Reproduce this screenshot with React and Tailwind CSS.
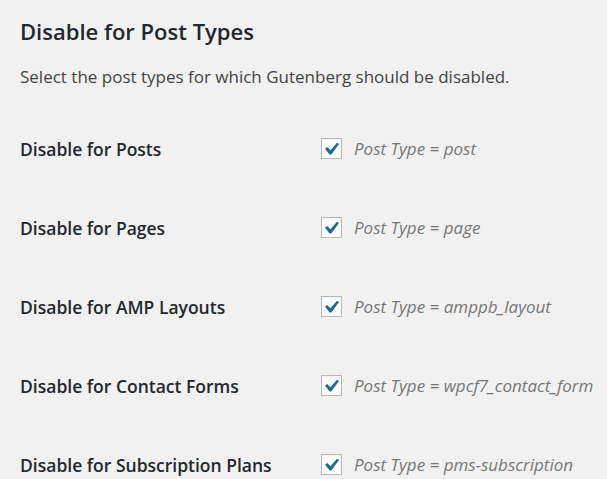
import React from 'react'

const rows = [
  { label: 'Disable for Posts', type: 'post' },
  { label: 'Disable for Pages', type: 'page' },
  { label: 'Disable for AMP Layouts', type: 'amppb_layout' },
  { label: 'Disable for Contact Forms', type: 'wpcf7_contact_form' },
  { label: 'Disable for Subscription Plans', type: 'pms-subscription' },
]

function Check() {
  return (
    <span className="flex h-[21px] w-[21px] shrink-0 items-center justify-center border border-[#b4b9be] bg-white shadow-[inset_0_1px_2px_rgba(0,0,0,0.07)]">
      <svg viewBox="3 2 15 15" className="h-[21px] w-[21px]">
        <path d="M14.83 4.89l1.6 1.1-6.07 8.22H9.02L5.4 9.67l1.6-1.45 2.7 2.6z" fill="#1e6a92" />
      </svg>
    </span>
  )
}

export default function App() {
  return (
    <div className="h-[479px] w-full overflow-hidden bg-[#f1f1f1] px-5 pt-4 text-[#23282d]" style={{ fontFamily: '"Open Sans", "Noto Sans", sans-serif' }}>
      <h2 className="text-[22px] font-semibold leading-[30px]">Disable for Post Types</h2>
      <p className="mt-[19px] text-[17px] leading-[24px] text-[#444]">Select the post types for which Gutenberg should be disabled.</p>
      <div className="mt-[20px]">
        {rows.map((r) => (
          <div key={r.type} className="flex h-[79px] items-center">
            <div className="w-[301px] shrink-0 text-[17.5px] font-semibold leading-[26px]">{r.label}</div>
            <label className="flex items-center gap-3">
              <Check />
              <span className="whitespace-nowrap text-[17px] italic leading-[24px] text-[#777]">Post Type = {r.type}</span>
            </label>
          </div>
        ))}
      </div>
    </div>
  )
}
